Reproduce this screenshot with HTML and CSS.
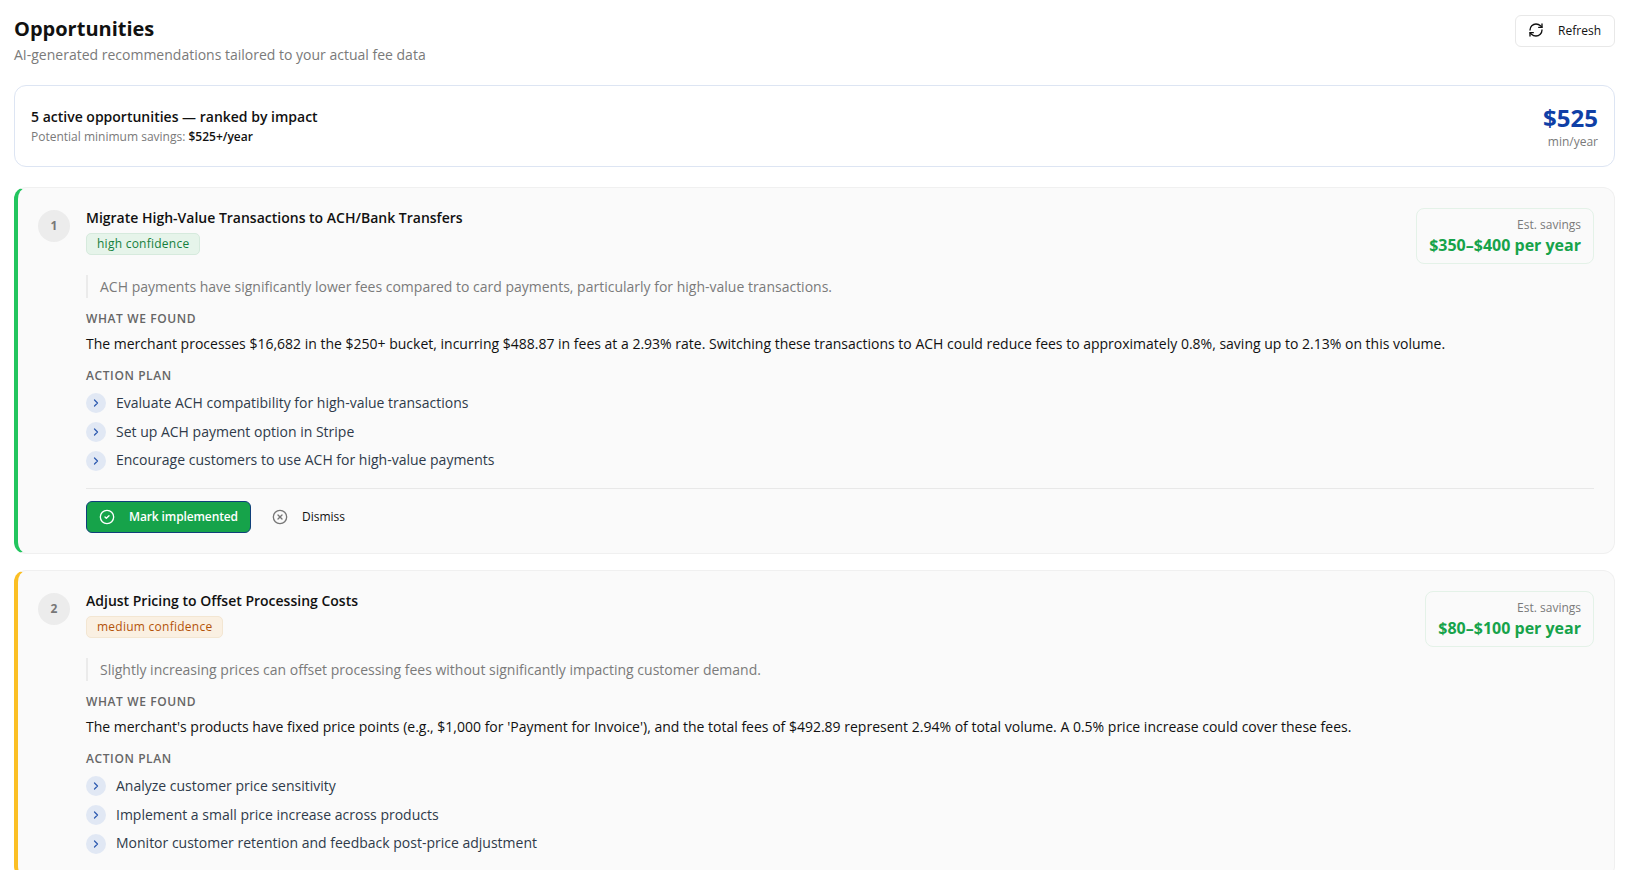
FILE: index.html
```html
<!DOCTYPE html>
<html lang="en">
<head>
  <meta charset="UTF-8">
  <title>Opportunities</title>
  <link rel="stylesheet" href="styles.css">
</head>
<body>
  <div class="page">
    <div class="page-head">
      <div>
        <h1>Opportunities</h1>
        <p class="subtitle">AI-generated recommendations tailored to your actual fee data</p>
      </div>
      <button class="refresh-btn">
        <svg class="icon-16" viewBox="0 0 24 24"><path d="M3 12a9 9 0 0 1 9-9 9.75 9.75 0 0 1 6.74 2.74L21 8"/><path d="M21 3v5h-5"/><path d="M21 12a9 9 0 0 1-9 9 9.75 9.75 0 0 1-6.74-2.74L3 16"/><path d="M8 16H3v5"/></svg>
        Refresh
      </button>
    </div>

    <div class="summary">
      <div class="summary-text">
        <div class="summary-title">5 active opportunities — ranked by impact</div>
        <div class="summary-sub">Potential minimum savings: <strong>$525+/year</strong></div>
      </div>
      <div class="summary-total">
        <div class="total-num">$525</div>
        <div class="total-unit">min/year</div>
      </div>
    </div>

    <div class="opp-card high">
      <div class="opp-head">
        <div class="rank">1</div>
        <div class="opp-title">
          <h3>Migrate High-Value Transactions to ACH/Bank Transfers</h3>
          <span class="badge badge-high">high confidence</span>
        </div>
        <div class="savings">
          <div class="savings-label">Est. savings</div>
          <div class="savings-value">$350–$400 per year</div>
        </div>
      </div>
      <div class="opp-body">
        <p class="quote">ACH payments have significantly lower fees compared to card payments, particularly for high-value transactions.</p>
        <div class="section-label">What we found</div>
        <p class="found">The merchant processes $16,682 in the $250+ bucket, incurring $488.87 in fees at a 2.93% rate. Switching these transactions to ACH could reduce fees to approximately 0.8%, saving up to 2.13% on this volume.</p>
        <div class="section-label">Action plan</div>
        <ul class="steps">
          <li><span class="chev"><svg viewBox="0 0 24 24"><path d="m9 6 6 6-6 6"/></svg></span>Evaluate ACH compatibility for high-value transactions</li>
          <li><span class="chev"><svg viewBox="0 0 24 24"><path d="m9 6 6 6-6 6"/></svg></span>Set up ACH payment option in Stripe</li>
          <li><span class="chev"><svg viewBox="0 0 24 24"><path d="m9 6 6 6-6 6"/></svg></span>Encourage customers to use ACH for high-value payments</li>
        </ul>
        <div class="actions">
          <button class="btn-done">
            <svg class="icon-16" viewBox="0 0 24 24"><circle cx="12" cy="12" r="10"/><path d="m9 12 2 2 4-4"/></svg>
            Mark implemented
          </button>
          <button class="btn-dismiss">
            <svg class="icon-16" viewBox="0 0 24 24"><circle cx="12" cy="12" r="10"/><path d="m15 9-6 6"/><path d="m9 9 6 6"/></svg>
            Dismiss
          </button>
        </div>
      </div>
    </div>

    <div class="opp-card medium">
      <div class="opp-head">
        <div class="rank">2</div>
        <div class="opp-title">
          <h3>Adjust Pricing to Offset Processing Costs</h3>
          <span class="badge badge-medium">medium confidence</span>
        </div>
        <div class="savings">
          <div class="savings-label">Est. savings</div>
          <div class="savings-value">$80–$100 per year</div>
        </div>
      </div>
      <div class="opp-body">
        <p class="quote">Slightly increasing prices can offset processing fees without significantly impacting customer demand.</p>
        <div class="section-label">What we found</div>
        <p class="found">The merchant's products have fixed price points (e.g., $1,000 for 'Payment for Invoice'), and the total fees of $492.89 represent 2.94% of total volume. A 0.5% price increase could cover these fees.</p>
        <div class="section-label">Action plan</div>
        <ul class="steps">
          <li><span class="chev"><svg viewBox="0 0 24 24"><path d="m9 6 6 6-6 6"/></svg></span>Analyze customer price sensitivity</li>
          <li><span class="chev"><svg viewBox="0 0 24 24"><path d="m9 6 6 6-6 6"/></svg></span>Implement a small price increase across products</li>
          <li><span class="chev"><svg viewBox="0 0 24 24"><path d="m9 6 6 6-6 6"/></svg></span>Monitor customer retention and feedback post-price adjustment</li>
        </ul>
      </div>
    </div>
  </div>
</body>
</html>
```

FILE: styles.css
```css
* {
  box-sizing: border-box;
}

html, body {
  height: 100%;
  overflow: hidden;
}

body {
  margin: 0;
  background: #fff;
  color: #111;
  font-family: 'Open Sans', sans-serif;
  font-size: 14px;
}

svg {
  fill: none;
  stroke: currentColor;
  stroke-width: 2;
  stroke-linecap: round;
  stroke-linejoin: round;
}

.icon-16 {
  width: 16px;
  height: 16px;
  flex: none;
}

.page {
  padding: 14px 26px 0 14px;
}

.page-head {
  display: flex;
  justify-content: space-between;
  align-items: flex-start;
  height: 71px;
}

h1 {
  margin: 0;
  font-size: 20px;
  line-height: 30px;
  font-weight: 700;
}

.subtitle {
  margin: 1px 0 0;
  color: #7a7a7a;
  font-size: 14px;
  line-height: 20px;
}

button {
  font-family: inherit;
  cursor: pointer;
}

.refresh-btn {
  display: flex;
  align-items: center;
  gap: 14px;
  height: 32px;
  margin-top: 1px;
  padding: 0 13px 2px 12px;
  background: #fff;
  border: 1px solid #e8e8e8;
  border-radius: 6px;
  color: #111;
  font-size: 12px;
  font-weight: 500;
}

.summary {
  display: flex;
  justify-content: space-between;
  align-items: center;
  height: 82px;
  padding: 0 16px;
  border: 1px solid #dde5f3;
  border-radius: 12px;
  margin-bottom: 20px;
}

.summary-text {
  padding-top: 1px;
}

.summary-title {
  font-size: 14px;
  line-height: 20px;
  font-weight: 600;
}

.summary-sub {
  margin-top: 1px;
  color: #7a7a7a;
  font-size: 12px;
  line-height: 18px;
}

.summary-sub strong {
  color: #111;
  font-weight: 600;
}

.summary-total {
  padding-top: 3px;
  text-align: right;
}

.total-num {
  margin-bottom: 1px;
  color: #0f3fa6;
  font-size: 24px;
  line-height: 28px;
  font-weight: 700;
}

.total-unit {
  color: #7a7a7a;
  font-size: 12px;
  line-height: 18px;
}

.opp-card {
  background: #fafafa;
  border: 1px solid #f0f0f0;
  border-left-width: 4px;
  border-radius: 12px;
  padding: 20px;
  margin-bottom: 16px;
}

.opp-card.high {
  border-left-color: #22c55e;
}

.opp-card.medium {
  border-left-color: #fbbf24;
}

.opp-head {
  display: flex;
  align-items: flex-start;
  gap: 16px;
}

.rank {
  flex: none;
  width: 32px;
  height: 32px;
  margin-top: 2px;
  border-radius: 50%;
  background: #ececec;
  color: #777;
  font-size: 12px;
  font-weight: 700;
  line-height: 32px;
  text-align: center;
}

.opp-title {
  flex: 1;
}

h3 {
  margin: 0 0 5px;
  font-size: 14px;
  line-height: 20px;
  font-weight: 600;
}

.badge {
  display: inline-block;
  height: 22px;
  padding: 0 10px;
  border: 1px solid;
  border-radius: 5px;
  font-size: 12px;
  line-height: 20px;
  letter-spacing: 0.25px;
}

.badge-high {
  background: #e6f4ea;
  border-color: #d6eadd;
  color: #15803d;
}

.badge-medium {
  background: #faf0e2;
  border-color: #f3e6d2;
  color: #b45309;
}

.savings {
  flex: none;
  padding: 7px 12px;
  border: 1px solid #e4f2e8;
  border-radius: 8px;
  text-align: right;
}

.savings-label {
  color: #7a7a7a;
  font-size: 12px;
  line-height: 18px;
}

.savings-value {
  color: #16a34a;
  font-size: 16px;
  line-height: 22px;
  font-weight: 700;
}

.opp-body {
  margin-left: 48px;
}

.quote {
  margin: 11px 0 0;
  padding-left: 12px;
  border-left: 2px solid #ebebeb;
  color: #7a7a7a;
  font-size: 14px;
  line-height: 23px;
}

.section-label {
  margin-top: 12px;
  color: #666;
  font-size: 12px;
  line-height: 18px;
  font-weight: 600;
  letter-spacing: 0.6px;
  text-transform: uppercase;
}

.found {
  margin: 5px 0 0;
  font-size: 14px;
  line-height: 22px;
}

.steps {
  list-style: none;
  margin: 3px 0 0;
  padding: 0;
}

.steps li {
  display: flex;
  align-items: center;
  gap: 10px;
  height: 28.7px;
  color: #2f3a4a;
  font-size: 14px;
}

.chev {
  flex: none;
  display: flex;
  align-items: center;
  justify-content: center;
  width: 20px;
  height: 20px;
  margin-top: 2px;
  border-radius: 50%;
  background: #e1e8f4;
  color: #2f5bb0;
}

.chev svg {
  width: 12px;
  height: 12px;
  stroke-width: 2.5;
}

.actions {
  display: flex;
  align-items: center;
  gap: 21px;
  margin-top: 14px;
  padding-top: 12px;
  border-top: 1px solid #e8e8e8;
}

.btn-done {
  display: flex;
  align-items: center;
  gap: 14px;
  height: 32px;
  padding: 0 12px 1px;
  background: #16a34a;
  border: 1px solid #0f3f7a;
  border-radius: 6px;
  color: #fff;
  font-size: 12px;
  font-weight: 600;
  letter-spacing: -0.12px;
}

.btn-dismiss {
  display: flex;
  align-items: center;
  gap: 14px;
  padding: 0 0 1px;
  background: none;
  border: 0;
  color: #111;
  font-size: 12px;
}

.btn-dismiss svg {
  color: #777;
}
```
